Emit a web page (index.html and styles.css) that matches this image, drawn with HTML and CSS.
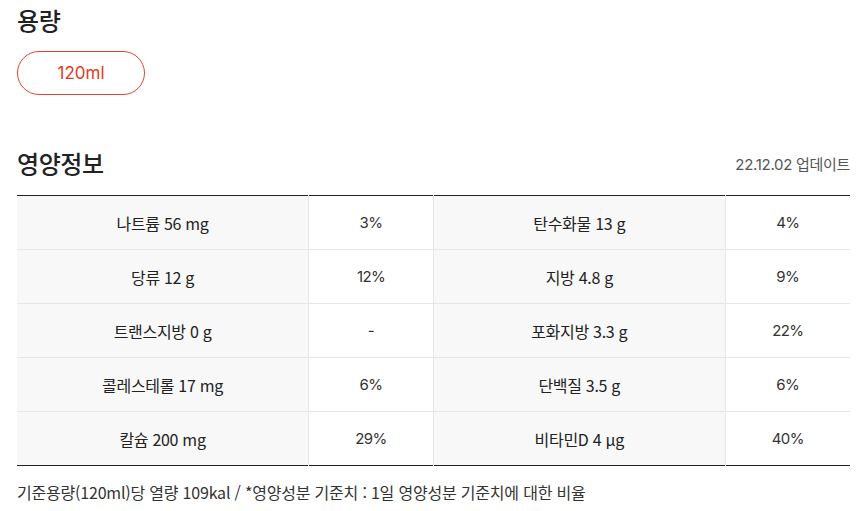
FILE: index.html
```html
<!DOCTYPE html>
<html lang="ko">
<head>
<meta charset="utf-8">
<link rel="stylesheet" href="styles.css">
</head>
<body>
<div class="page">
  <section class="capacity">
    <h2 class="title">용량</h2>
    <div class="pills"><span class="pill">120ml</span></div>
  </section>
  <section class="nutrition">
    <div class="head">
      <h2 class="title">영양정보</h2>
      <span class="updated">22.12.02 업데이트</span>
    </div>
    <table class="ntable">
      <colgroup><col class="c-label"><col class="c-val"><col class="c-label"><col class="c-val"></colgroup>
      <tbody>
        <tr><th>나트륨 56 mg</th><td>3%</td><th>탄수화물 13 g</th><td>4%</td></tr>
        <tr><th>당류 12 g</th><td>12%</td><th>지방 4.8 g</th><td>9%</td></tr>
        <tr><th>트랜스지방 0 g</th><td>-</td><th>포화지방 3.3 g</th><td>22%</td></tr>
        <tr><th>콜레스테롤 17 mg</th><td>6%</td><th>단백질 3.5 g</th><td>6%</td></tr>
        <tr><th>칼슘 200 mg</th><td>29%</td><th>비타민D 4 μg</th><td>40%</td></tr>
      </tbody>
    </table>
    <p class="note">기준용량(120ml)당 열량 109kal / *영양성분 기준치 : 1일 영양성분 기준치에 대한 비율</p>
  </section>
</div>
</body>
</html>
```
FILE: styles.css
```css
* { box-sizing: border-box; }
html, body { margin: 0; padding: 0; background: #fff; }
body {
  font-family: "Noto Sans CJK KR", "Noto Sans", sans-serif;
  color: #222;
}
.page { padding: 0 15px 0 17px; }
.title {
  margin: 0;
  font-size: 24px;
  font-weight: 500;
  line-height: 32px;
  color: #222;
  letter-spacing: -0.4px;
}
.capacity { padding-top: 4px; }
.pills { margin-top: 15px; display: flex; }
.pill {
  display: inline-flex;
  align-items: center;
  justify-content: center;
  width: 128px;
  height: 44px;
  border: 1px solid #e5452e;
  border-radius: 22px;
  color: #e23b22;
  font-family: "Inter", "Noto Sans", sans-serif;
  font-size: 17px;
  letter-spacing: 0;
}
.nutrition { margin-top: 52px; }
.head {
  display: flex;
  justify-content: space-between;
  align-items: center;
  height: 32px;
}
.updated {
  font-family: "Inter", "Noto Sans CJK KR", sans-serif;
  font-size: 15px;
  color: #555;
  letter-spacing: -0.3px;
}
.ntable {
  margin-top: 16px;
  width: 833px;
  border-collapse: collapse;
  table-layout: fixed;
  border-top: 1px solid #222;
  border-bottom: 1px solid #222;
}
.c-label { width: 35%; }
.c-val { width: 15%; }
.ntable th, .ntable td {
  height: 54px;
  padding: 0;
  text-align: center;
  vertical-align: middle;
  border-top: 1px solid #e6e6e6;
  font-size: 16px;
}
.ntable tr:first-child th, .ntable tr:first-child td { border-top: 0; }
.ntable th {
  background: #f8f8f8;
  font-weight: 400;
  color: #222;
  letter-spacing: -0.3px;
  border-right: 1px solid #e6e6e6;
}
.ntable td {
  font-family: "Inter", "Noto Sans", sans-serif;
  color: #333;
  font-size: 15px;
  letter-spacing: -0.6px;
  border-right: 1px solid #e6e6e6;
}
.ntable td:last-child { border-right: 0; }
.note {
  margin: 14px 0 0;
  font-size: 16px;
  color: #333;
  letter-spacing: -0.2px;
}
```
